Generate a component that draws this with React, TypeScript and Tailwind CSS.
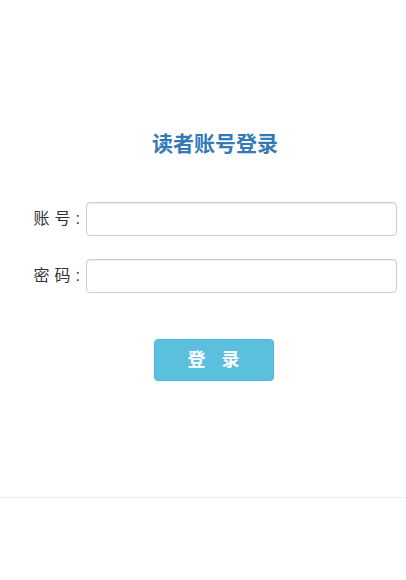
function Label({ a, b }: { a: string; b: string }) {
  return (
    <label className="w-[86px] pr-[6px] flex justify-end items-center text-[16px] leading-[20px] text-[#333]">
      <span>{a}</span>
      <span className="ml-[5px]">{b}</span>
      <span className="ml-[5px]">:</span>
    </label>
  );
}

export default function App() {
  const font = { fontFamily: '"Helvetica Neue", "Liberation Sans", "Noto Sans CJK SC", sans-serif' };
  return (
    <div className="w-[406px] h-[580px] bg-white flex flex-col" style={font}>
      <div className="h-[498px] border-b border-[#eeeeee] flex flex-col">
        <h3 className="mt-[132px] pl-[24px] text-center text-[21px] leading-[24px] font-bold text-[#337ab7]">读者账号登录</h3>
        <div className="mt-[46px] flex items-center h-[34px]">
          <Label a="账" b="号" />
          <input className="w-[311px] h-[34px] border border-[#cccccc] rounded-[4px] px-3 text-[14px] outline-none shadow-[inset_0_1px_1px_rgba(0,0,0,0.075)]" />
        </div>
        <div className="mt-[23px] flex items-center h-[34px]">
          <Label a="密" b="码" />
          <input type="password" className="w-[311px] h-[34px] border border-[#cccccc] rounded-[4px] px-3 text-[14px] outline-none shadow-[inset_0_1px_1px_rgba(0,0,0,0.075)]" />
        </div>
        <div className="mt-[46px] flex justify-center pl-[21px]">
          <button className="w-[120px] h-[42px] bg-[#5bc0de] border border-[#46b8da] rounded-[4px] text-white text-[18px] font-bold flex items-center justify-center">
            <span>登</span>
            <span className="ml-[16px]">录</span>
          </button>
        </div>
      </div>
    </div>
  );
}
